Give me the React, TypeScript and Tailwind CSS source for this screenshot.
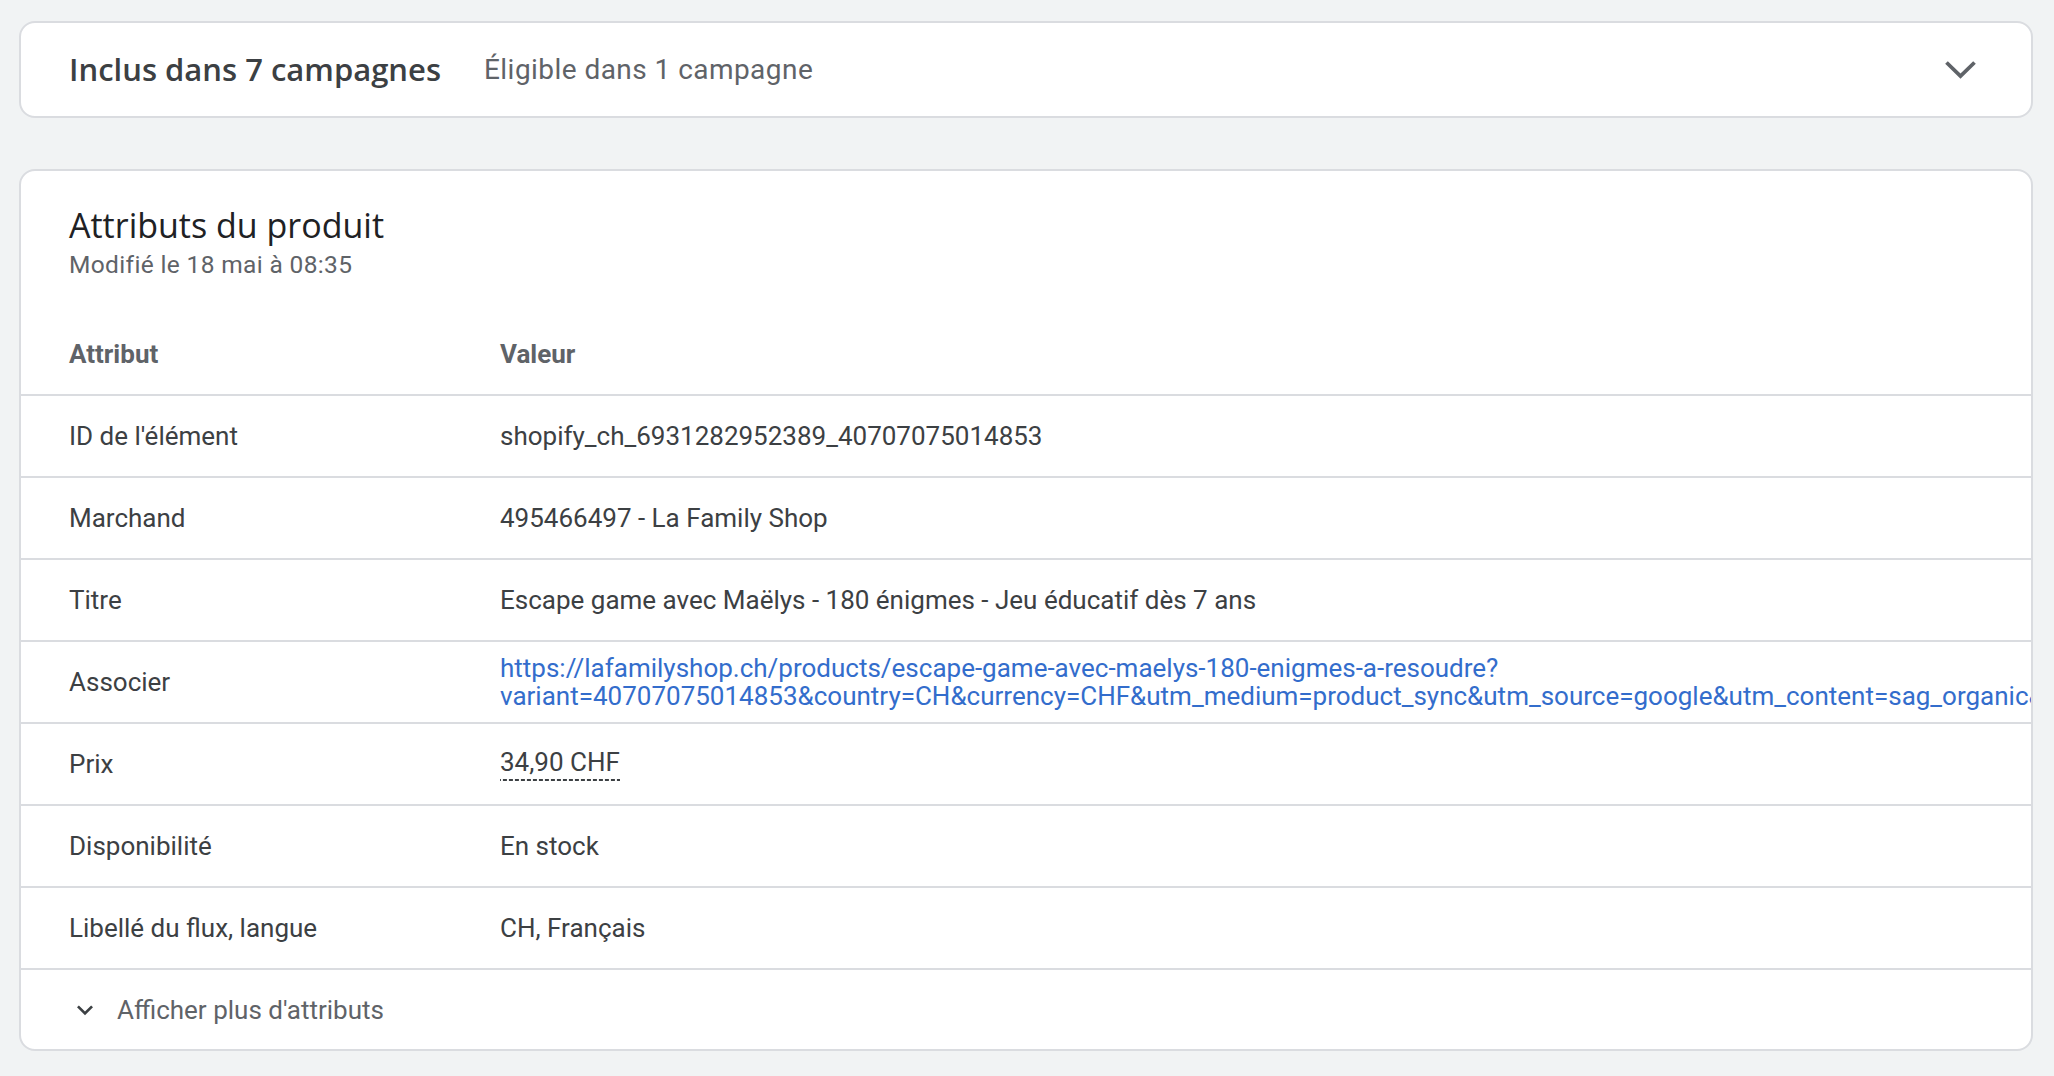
import React from "react";

const rows: { label: string; value: React.ReactNode }[] = [
  { label: "ID de l'élément", value: "shopify_ch_6931282952389_40707075014853" },
  { label: "Marchand", value: "495466497 - La Family Shop" },
  { label: "Titre", value: "Escape game avec Maëlys - 180 énigmes - Jeu éducatif dès 7 ans" },
  {
    label: "Associer",
    value: (
      <div className="leading-[28px] whitespace-nowrap text-[#336dcc]">
        <div>https://lafamilyshop.ch/products/escape-game-avec-maelys-180-enigmes-a-resoudre?</div>
        <div>
          variant=40707075014853&amp;country=CH&amp;currency=CHF&amp;utm_medium=product_sync&amp;utm_source=google&amp;utm_content=sag_organic&amp;utm_campaign=sag_organic
        </div>
      </div>
    ),
  },
  {
    label: "Prix",
    value: (
      <span className="inline-block leading-[30px] pb-[4px] bg-[linear-gradient(to_right,#3c4043_66%,transparent_0)] bg-[length:6px_2px] bg-repeat-x bg-bottom">
        34,90 CHF
      </span>
    ),
  },
  { label: "Disponibilité", value: "En stock" },
  { label: "Libellé du flux, langue", value: "CH, Français" },
];

export default function App() {
  return (
    <div className="min-h-[1076px] w-full bg-[#f1f3f4] pt-[21px] pb-[26px] pl-[19px] pr-[21px] font-[Roboto,sans-serif]">
      {/* Card 1 */}
      <div className="h-[97px] rounded-[16px] border-2 border-[#dadce0] bg-white flex items-center pl-[48px] pr-[55px]">
        <div className="font-['Open_Sans',sans-serif] font-semibold text-[31px] text-[#3c4043] whitespace-nowrap">
          Inclus dans 7 campagnes
        </div>
        <div className="ml-[43px] text-[28px] tracking-[0.45px] text-[#5f6368] whitespace-nowrap">
          Éligible dans 1 campagne
        </div>
        <div className="ml-auto">
          <svg width="31" height="17" viewBox="0 0 31 17" fill="none" className="overflow-visible">
            <path d="M1.5 1.5 L15.5 15 L29.5 1.5" stroke="#5f6368" strokeWidth="3.8" />
          </svg>
        </div>
      </div>

      {/* Card 2 */}
      <div className="mt-[51px] rounded-[16px] border-2 border-[#dadce0] bg-white overflow-hidden">
        <div className="pl-[48px] pt-[31px]">
          <div className="font-['Open_Sans',sans-serif] text-[34px] leading-[46px] text-[#202124]">
            Attributs du produit
          </div>
          <div className="mt-[2px] text-[24.5px] leading-[30px] tracking-[0.35px] text-[#5f6368]">
            Modifié le 18 mai à 08:35
          </div>
        </div>

        <div className="flex pt-[59px] pb-[25px] border-b-2 border-[#dadce0] text-[26px] leading-[30px] font-bold text-[#5f6368]">
          <div className="w-[479px] shrink-0 pl-[48px]">Attribut</div>
          <div className="flex-1 min-w-0">Valeur</div>
        </div>

        {rows.map((r) => (
          <div
            key={r.label}
            className="flex items-center h-[82px] border-b-2 border-[#dadce0] text-[26px] leading-[30px] text-[#3c4043]"
          >
            <div className="w-[479px] shrink-0 pl-[48px] whitespace-nowrap">{r.label}</div>
            <div className="flex-1 min-w-0 whitespace-nowrap">{r.value}</div>
          </div>
        ))}

        <div className="flex items-center h-[79px] pl-[48px] text-[26px] leading-[30px] text-[#5f6368]">
          <svg width="32" height="32" viewBox="0 0 24 24" className="shrink-0">
            <path d="M7.41 8.59L12 13.17l4.59-4.58L18 10l-6 6-6-6 1.41-1.41z" fill="#3c4043" />
          </svg>
          <span className="ml-[16px]">Afficher plus d'attributs</span>
        </div>
      </div>
    </div>
  );
}
